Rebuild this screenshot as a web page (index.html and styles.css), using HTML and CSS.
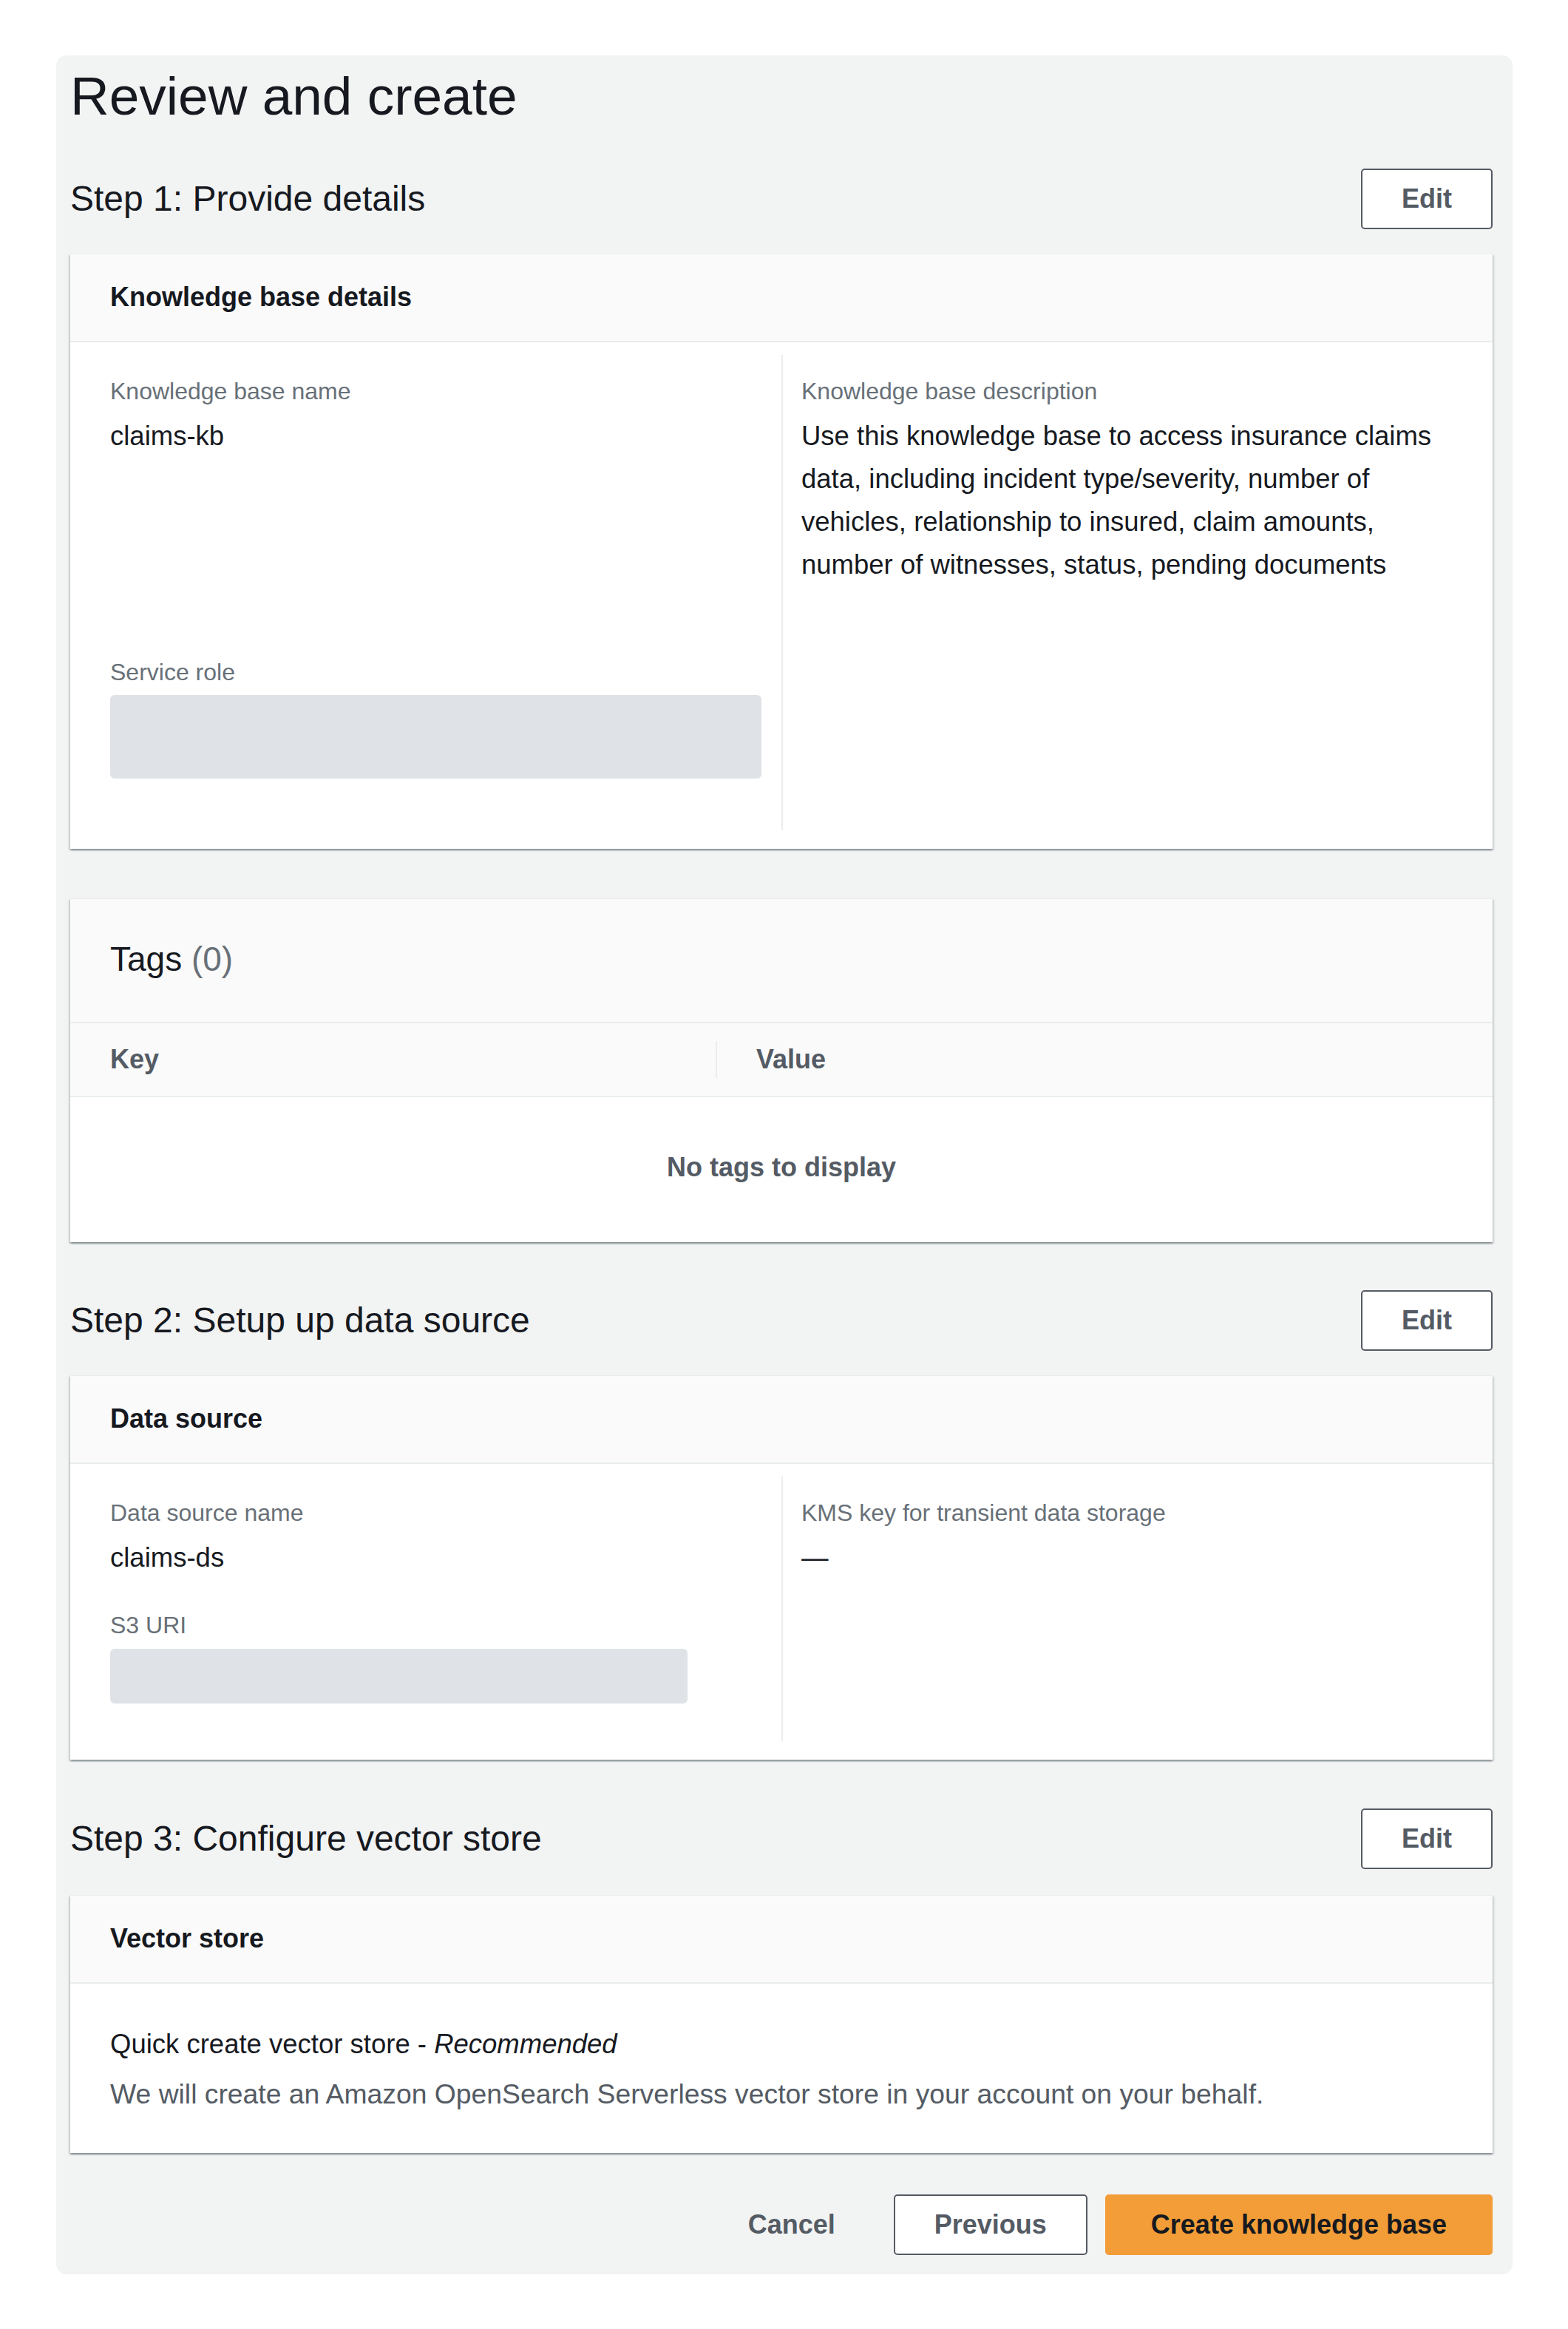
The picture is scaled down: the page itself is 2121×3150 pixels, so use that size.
FILE: index.html
```html
<!DOCTYPE html>
<html lang="en">
<head>
<meta charset="utf-8">
<title>Review and create</title>
<link rel="stylesheet" href="styles.css">
</head>
<body>
<div class="page">
  <main class="wizard">
    <h1 class="title">Review and create</h1>

    <section class="step step--first">
      <div class="step-head">
        <h2 class="step-title">Step 1: Provide details</h2>
        <button class="btn">Edit</button>
      </div>
      <div class="card">
        <div class="card-head">Knowledge base details</div>
        <div class="card-body card-body--cols">
          <div class="col col--left col--pb70">
            <div class="field">
              <div class="label">Knowledge base name</div>
              <div class="value">claims-kb</div>
            </div>
            <div class="field field--far">
              <div class="label">Service role</div>
              <div class="redacted redacted--role"></div>
            </div>
          </div>
          <div class="col col--right col--pb70">
            <div class="field">
              <div class="label">Knowledge base description</div>
              <div class="value">Use this knowledge base to access insurance claims data, including incident type/severity, number of vehicles, relationship to insured, claim amounts, number of witnesses, status, pending documents</div>
            </div>
          </div>
        </div>
      </div>
    </section>

    <section class="card card--tags">
      <div class="tags-head">
        <h2 class="tags-title">Tags <span class="count">(0)</span></h2>
      </div>
      <div class="table-head">
        <div class="th th--key">Key</div>
        <div class="th th--value">Value</div>
      </div>
      <div class="table-empty">No tags to display</div>
    </section>

    <section class="step step--second">
      <div class="step-head">
        <h2 class="step-title">Step 2: Setup up data source</h2>
        <button class="btn">Edit</button>
      </div>
      <div class="card">
        <div class="card-head">Data source</div>
        <div class="card-body card-body--cols">
          <div class="col col--left col--pb51">
            <div class="field">
              <div class="label">Data source name</div>
              <div class="value">claims-ds</div>
            </div>
            <div class="field field--near">
              <div class="label">S3 URI</div>
              <div class="redacted redacted--uri"></div>
            </div>
          </div>
          <div class="col col--right col--pb51">
            <div class="field">
              <div class="label">KMS key for transient data storage</div>
              <div class="value">—</div>
            </div>
          </div>
        </div>
      </div>
    </section>

    <section class="step step--third">
      <div class="step-head">
        <h2 class="step-title">Step 3: Configure vector store</h2>
        <button class="btn">Edit</button>
      </div>
      <div class="card">
        <div class="card-head">Vector store</div>
        <div class="card-body card-body--text">
          <div class="value">Quick create vector store - <em>Recommended</em></div>
          <div class="desc">We will create an Amazon OpenSearch Serverless vector store in your account on your behalf.</div>
        </div>
      </div>
    </section>

    <div class="actions">
      <button class="btn btn--link">Cancel</button>
      <button class="btn">Previous</button>
      <button class="btn btn--primary">Create knowledge base</button>
    </div>
  </main>
</div>
</body>
</html>
```

FILE: styles.css
```css
* { box-sizing: border-box; }

html, body {
  margin: 0;
  padding: 0;
  background: #ffffff;
}

body {
  font-family: "Liberation Sans", Arial, sans-serif;
  color: #16191f;
}

.page {
  padding: 75px 0 0 76px;
}

.wizard {
  width: 1970px;
  background: #f2f3f3;
  border-radius: 14px;
  padding: 11px 27px 26px 19px;
}

.title {
  margin: 0;
  font-size: 73px;
  line-height: 88px;
  font-weight: 400;
  color: #16191f;
}

.step--first { margin-top: 54px; }
.step--second { margin-top: 65px; }
.step--third { margin-top: 66px; }

.step-head {
  display: flex;
  align-items: center;
  justify-content: space-between;
  margin-bottom: 33px;
}

.step--third .step-head { margin-bottom: 35px; }

.step-title {
  margin: 0;
  font-size: 48px;
  line-height: 56px;
  font-weight: 400;
  color: #16191f;
}

.btn {
  font-family: "Liberation Sans", Arial, sans-serif;
  font-size: 36px;
  line-height: 48px;
  font-weight: 700;
  color: #545b64;
  background: #ffffff;
  border: 2px solid #545b64;
  border-radius: 5px;
  padding: 15px 53px;
  cursor: pointer;
  white-space: nowrap;
}

.btn--link {
  border-color: transparent;
  background: transparent;
}

.btn--primary {
  background: #f29d38;
  border-color: #f29d38;
  color: #16191f;
  padding: 15px 60px;
}

.card {
  background: #ffffff;
  border-top: 1px solid #eaeded;
  box-shadow: 0 2px 2px 0 rgba(0, 28, 36, 0.3), 2px 2px 2px 0 rgba(0, 28, 36, 0.12), -2px 2px 2px 0 rgba(0, 28, 36, 0.12);
}

.card-head {
  background: #fafafa;
  border-bottom: 2px solid #eaeded;
  padding: 34px 54px 35px;
  font-size: 36px;
  line-height: 48px;
  font-weight: 700;
  color: #16191f;
}

.card-body--cols {
  display: grid;
  grid-template-columns: 1fr 1fr;
  padding: 17px 54px 25px;
}

.col {
  display: flex;
  flex-direction: column;
  padding-top: 27px;
}

.col--left { padding-right: 27px; }

.col--right {
  border-left: 2px solid #eaeded;
  padding-left: 25px;
}

.col--pb70 { padding-bottom: 70px; }
.col--pb51 { padding-bottom: 51px; }

.field--far { margin-top: 268px; }
.field--near { margin-top: 40px; }

.label {
  font-size: 32px;
  line-height: 44px;
  color: #687078;
}

.value {
  margin-top: 10px;
  font-size: 36.5px;
  line-height: 58px;
  color: #16191f;
}

.redacted {
  background: #dfe2e6;
  border-radius: 6px;
}

.redacted--role {
  margin-top: 9px;
  height: 113px;
}

.redacted--uri {
  margin-top: 10px;
  width: 781px;
  height: 74px;
}

.card-body--text {
  padding: 53px 54px 51px;
}

.card-body--text .value { margin-top: 0; }

.desc {
  margin-top: 9px;
  font-size: 37.3px;
  line-height: 58px;
  color: #545b64;
}

.card--tags { margin-top: 67px; }

.tags-head {
  background: #fafafa;
  border-bottom: 2px solid #eaeded;
  padding: 53px 54px 57px;
}

.tags-title {
  margin: 0;
  font-size: 46px;
  line-height: 56px;
  font-weight: 400;
  color: #16191f;
}

.count { color: #687078; }

.table-head {
  display: flex;
  background: #fafafa;
  border-bottom: 2px solid #eaeded;
}

.th {
  font-size: 36px;
  line-height: 48px;
  font-weight: 700;
  color: #545b64;
  padding: 25px 0 25px;
}

.th--key {
  width: 873px;
  padding-left: 54px;
}

.th--value {
  flex: 1;
  position: relative;
  padding-left: 55px;
}

.th--value::before {
  content: "";
  position: absolute;
  left: 0;
  top: 24px;
  bottom: 24px;
  width: 2px;
  background: #eaeded;
}

.table-empty {
  text-align: center;
  font-size: 36px;
  line-height: 48px;
  font-weight: 700;
  color: #545b64;
  padding: 71px 0 77px;
}

.actions {
  display: flex;
  justify-content: flex-end;
  gap: 24px;
  margin-top: 56px;
}
```
